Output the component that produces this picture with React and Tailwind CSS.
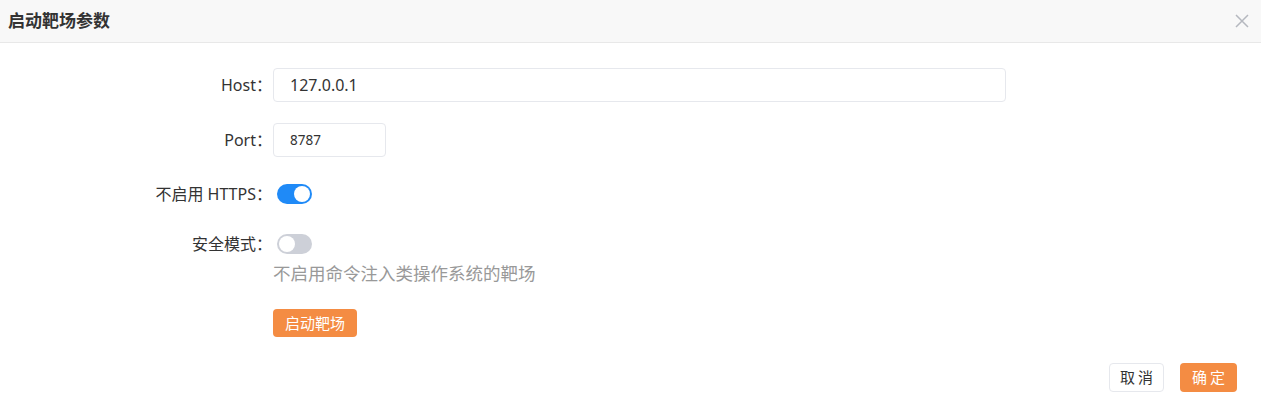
import React, { useState } from "react";

const Toggle = ({ on, onChange }) => (
  <button
    type="button"
    onClick={() => onChange(!on)}
    className={`relative h-[20px] w-[35px] rounded-full ${on ? "bg-[#1f8af7]" : "bg-[#cdd0d8]"}`}
  >
    <span
      className={`absolute top-[2px] h-[16px] w-[16px] rounded-full bg-white ${on ? "left-[17px]" : "left-[2px]"}`}
    />
  </button>
);

const Row = ({ label, children, className = "" }) => (
  <div className={`flex items-center ${className}`}>
    <div className="w-[272px] text-right text-[16px] text-[#333]">{label}：</div>
    <div className="ml-[1px] flex items-center">{children}</div>
  </div>
);

const App = () => {
  const [host, setHost] = useState("127.0.0.1");
  const [port, setPort] = useState("8787");
  const [noHttps, setNoHttps] = useState(true);
  const [safe, setSafe] = useState(false);

  return (
    <div
      className="h-[418px] w-full bg-white"
      style={{ fontFamily: '"Noto Sans", "Noto Sans CJK SC", sans-serif' }}
    >
      <header className="flex h-[43px] items-center justify-between border-b border-[#e8e8e8] bg-[#f8f8f8] px-2">
        <p className="text-[17px] font-bold text-[#333]">启动靶场参数</p>
        <button className="mr-[4px] text-[#b5b8bf]">
          <svg width="14" height="14" viewBox="0 0 14 14" fill="none" stroke="currentColor" strokeWidth="1.5">
            <path d="M1 1L13 13M13 1L1 13" />
          </svg>
        </button>
      </header>

      <main className="pt-[25px]">
        <Row label="Host">
          <input
            value={host}
            onChange={(e) => setHost(e.target.value)}
            className="h-[34px] w-[733px] rounded-[4px] border border-[#e6e8ed] px-4 text-[16px] text-[#333] outline-none"
          />
        </Row>
        <Row label="Port" className="mt-[21px]">
          <input
            value={port}
            onChange={(e) => setPort(e.target.value)}
            className="h-[34px] w-[113px] rounded-[4px] border border-[#e6e8ed] px-4 text-[13.5px] text-[#333] outline-none"
          />
        </Row>
        <Row label="不启用 HTTPS" className="mt-[25px]">
          <div className="ml-1 flex">
            <Toggle on={noHttps} onChange={setNoHttps} />
          </div>
        </Row>
        <Row label="安全模式" className="mt-[26px]">
          <div className="ml-1 flex">
            <Toggle on={safe} onChange={setSafe} />
          </div>
        </Row>
        <div className="ml-[273px] mt-[5px] text-[17.5px] leading-[24px] text-[#999]">
          不启用命令注入类操作系统的靶场
        </div>
        <div className="ml-[273px] mt-[24px]">
          <button className="h-[28px] w-[84px] rounded-[4px] bg-[#f48c43] text-[15px] text-white">
            启动靶场
          </button>
        </div>
      </main>

      <footer className="mt-[26px] flex justify-end gap-4 pr-6">
        <button className="h-[29px] w-[55px] rounded-[4px] border border-[#e6e8ed] bg-white pl-[3px] text-[15px] tracking-[3px] text-[#333]">
          取消
        </button>
        <button className="h-[29px] w-[57px] rounded-[4px] bg-[#f48c43] pl-[3px] text-[15px] tracking-[3px] text-white">
          确定
        </button>
      </footer>
    </div>
  );
};

export default App;
